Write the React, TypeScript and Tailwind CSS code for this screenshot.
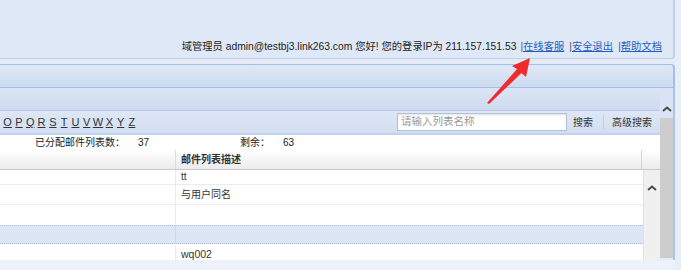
import React from "react";

const Chevron = ({ className = "" }: { className?: string }) => (
  <svg width="10" height="6" viewBox="0 0 10 6" className={className}>
    <polyline points="1,5 5,1.5 9,5" fill="none" stroke="#4a4a4a" strokeWidth="2" />
  </svg>
);

const letters = ["O", "P", "Q", "R", "S", "T", "U", "V", "W", "X", "Y", "Z"];

export default function App() {
  return (
    <div className="relative w-[681px] h-[270px] overflow-hidden flex bg-[#e4ebf7] text-[#222] font-['Liberation_Sans','Noto_Sans_CJK_SC',sans-serif] text-[10px]">
      <div className="w-[675px] flex flex-col">
        {/* header */}
        <div className="h-[59px] shrink-0 bg-[#dfe8f6] border-r-2 border-b border-[#bccfeb] rounded-br-[4px] flex items-end justify-end pr-[11px] pb-[4px] text-[10.3px]">
          <div className="flex items-center whitespace-nowrap leading-[14px]">
            <span>域管理员 admin@testbj3.link263.com 您好! 您的登录IP为 211.157.151.53</span>
            <span className="ml-[4px] text-[#555]">|</span>
            <span className="text-[#1f5fbf] underline">在线客服</span>
            <span className="ml-[5px] text-[#555]">|</span>
            <span className="text-[#1f5fbf] underline">安全退出</span>
            <span className="ml-[5px] text-[#555]">|</span>
            <span className="text-[#1f5fbf] underline">帮助文档</span>
          </div>
        </div>
        <div className="h-[5px] shrink-0" />
        {/* bar1 */}
        <div className="h-[24px] shrink-0 border-t border-r-2 border-b border-[#a3bfe8] rounded-tr-[4px] bg-gradient-to-b from-[#dfe8f6] to-[#cddbf0]" />
        {/* content */}
        <div className="flex h-[172px] shrink-0 border-r-2 border-[#a9c3ea]">
          <div className="w-[660px] flex flex-col">
            <div className="h-[23px] shrink-0 border-b border-[#b4c8e6] bg-gradient-to-b from-[#dbe5f4] to-[#cedbef]" />
            {/* toolbar */}
            <div className="h-[24px] shrink-0 flex items-center border-b-2 border-[#c2d3ee] bg-gradient-to-b from-[#dde7f5] to-[#d2def1]">
              <div className="flex pl-[2px] text-[11px]">
                {letters.map((l) => (
                  <span key={l} className="w-[11.3px] text-center underline text-[#333] leading-[14px]">
                    {l}
                  </span>
                ))}
              </div>
              <div className="ml-auto flex items-center pr-[8px]">
                <div className="w-[170px] h-[18px] bg-white border border-[#b3c2da] shadow-[inset_0_1px_2px_rgba(0,0,0,0.12)] flex items-center pl-[3px] text-[#999] text-[10.5px]">
                  请输入列表名称
                </div>
                <span className="ml-[6px] text-[#333]">搜索</span>
                <span className="ml-[10px] w-px h-[14px] bg-[#c3cfe0]" />
                <span className="ml-[8px] text-[#333]">高级搜索</span>
              </div>
            </div>
            {/* stats */}
            <div className="h-[15px] shrink-0 bg-white flex items-center leading-[13px]">
              <span className="ml-[35px] w-[103px]">已分配邮件列表数：</span>
              <span className="w-[102px]">37</span>
              <span className="w-[43px]">剩余：</span>
              <span>63</span>
            </div>
            {/* table header */}
            <div className="h-[20px] shrink-0 flex bg-gradient-to-b from-white to-[#ebebeb] border-b border-[#c9c9c9]">
              <div className="w-[176px] border-r border-[#dcdcdc]" />
              <div className="w-[466px] border-r border-[#d6d6d6] flex items-center pl-[5px] font-bold text-[#333]">
                邮件列表描述
              </div>
              <div className="flex-1" />
            </div>
            {/* rows */}
            <div className="flex flex-1 overflow-hidden bg-white">
              <div className="w-[643px] flex flex-col">
                <div className="h-[15px] shrink-0 flex border-b border-[#ececec]">
                  <div className="w-[176px] border-r border-[#ececec]" />
                  <div className="flex-1 pl-[5px] leading-[14px] text-[#333]">tt</div>
                </div>
                <div className="h-[20px] shrink-0 flex border-b border-[#ececec]">
                  <div className="w-[176px] border-r border-[#ececec]" />
                  <div className="flex-1 pl-[5px] flex items-center text-[#333]">与用户同名</div>
                </div>
                <div className="h-[20px] shrink-0 flex">
                  <div className="w-[176px] border-r border-[#ececec]" />
                  <div className="flex-1" />
                </div>
                <div className="h-[19px] shrink-0 flex bg-[#dde6f5] border-y border-dotted border-[#a8bde2]">
                  <div className="w-[176px] border-r border-[#cbd7ec]" />
                  <div className="flex-1" />
                </div>
                <div className="h-[16px] shrink-0 flex">
                  <div className="w-[176px] border-r border-[#ececec]" />
                  <div className="flex-1 pl-[5px] pt-[4px] leading-[12px] text-[#333] text-[10.5px]">wq002</div>
                </div>
              </div>
              <div className="flex-1 bg-[#f0f0f0] border-l border-[#e2e2e2] flex justify-center pt-[15px]">
                <Chevron />
              </div>
            </div>
          </div>
          {/* outer scrollbar */}
          <div className="flex-1 flex flex-col">
            <div className="h-[30px] shrink-0 bg-[#d9e3f3] flex justify-center items-end pb-[6px]">
              <Chevron />
            </div>
            <div className="flex-1 bg-[#cdcdcd] mb-[2px]" />
          </div>
        </div>
        <div className="flex-1 bg-[#edf2fa]" />
      </div>
      <div className="flex-1 bg-[#e8eef8]" />
      {/* red arrow annotation */}
      <svg className="absolute left-0 top-0" width="681" height="270" viewBox="0 0 681 270">
        <polygon
          points="530,58 526,77 521.5,73 489,104 487,103 517,69 512,66"
          fill="#f02b2b"
        />
      </svg>
    </div>
  );
}
